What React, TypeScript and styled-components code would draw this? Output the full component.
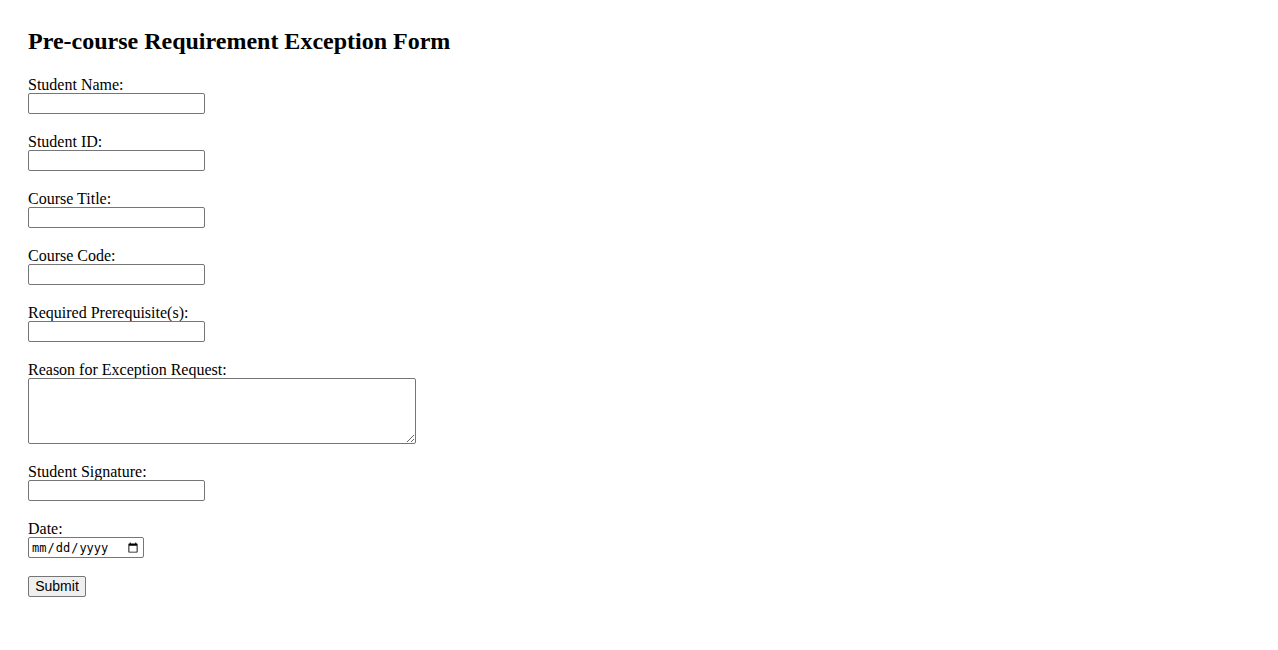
import React from "react";
import styled, { createGlobalStyle } from "styled-components";

const GlobalStyle = createGlobalStyle`
  body {
    margin: 0;
    background: #ffffff;
    color: #000000;
    font-family: "Liberation Serif", "Times New Roman", serif;
    font-size: 16px;
  }
`;

const Page = styled("div")`
  padding: 28px 28px 40px;
`;

const Title = styled("h2")`
  font-size: 24px;
  font-weight: bold;
  margin: 0 0 19px;
  line-height: 27px;
`;

const Form = styled("form")`
  display: flex;
  flex-direction: column;
  align-items: flex-start;
`;

const Field = styled("div")`
  display: flex;
  flex-direction: column;
  align-items: flex-start;
  margin-bottom: 17px;
`;

const Label = styled("label")`
  line-height: 22px;
  height: 19px;
`;

const TextInput = styled("input")`
  box-sizing: border-box;
  width: 177px;
  height: 21px;
  margin: 0;
  padding: 1px 2px;
  border: 1px solid #767676;
  border-radius: 2px;
  font-family: "Liberation Sans", Arial, sans-serif;
  font-size: 13.33px;
`;

const DateInput = styled(TextInput)`
  width: 116px;
  font-family: "DejaVu Sans Mono", "Liberation Mono", monospace;
  font-size: 12px;
`;

const TextArea = styled("textarea")`
  box-sizing: border-box;
  width: 388px;
  height: 66px;
  margin: 0;
  padding: 2px;
  border: 1px solid #767676;
  border-radius: 2px;
  font-family: "Liberation Mono", monospace;
  font-size: 13.33px;
`;

const SubmitButton = styled("button")`
  box-sizing: border-box;
  width: 58px;
  height: 21px;
  padding: 1px 6px;
  margin: 1px 0 0;
  border: 1px solid #767676;
  border-radius: 2px;
  background: #efefef;
  color: #000000;
  font-family: "Liberation Sans", Arial, sans-serif;
  font-size: 14px;
  line-height: 17px;
`;

const fields = [
  { id: "name", label: "Student Name:" },
  { id: "sid", label: "Student ID:" },
  { id: "title", label: "Course Title:" },
  { id: "code", label: "Course Code:" },
  { id: "prereq", label: "Required Prerequisite(s):" },
];

export default function App() {
  return (
    <>
      <GlobalStyle />
      <Page>
        <Title>Pre-course Requirement Exception Form</Title>
        <Form onSubmit={(e) => e.preventDefault()}>
          {fields.map((f) => (
            <Field key={f.id}>
              <Label htmlFor={f.id}>{f.label}</Label>
              <TextInput id={f.id} type="text" />
            </Field>
          ))}
          <Field>
            <Label htmlFor="reason">Reason for Exception Request:</Label>
            <TextArea id="reason" />
          </Field>
          <Field>
            <Label htmlFor="sign">Student Signature:</Label>
            <TextInput id="sign" type="text" />
          </Field>
          <Field>
            <Label htmlFor="date">Date:</Label>
            <DateInput id="date" type="date" />
          </Field>
          <SubmitButton type="submit">Submit</SubmitButton>
        </Form>
      </Page>
    </>
  );
}
